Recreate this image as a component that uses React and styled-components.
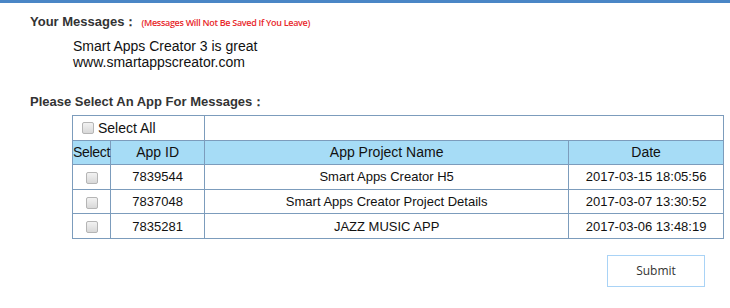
import React from "react";
import styled, { createGlobalStyle } from "styled-components";

const GlobalStyles = createGlobalStyle`
  html, body {
    margin: 0;
    padding: 0;
    background: #fff;
  }
  body {
    font-family: "Liberation Sans", Arial, sans-serif;
    color: #222;
  }
`;

const Page = styled.div`
  width: 730px;
  height: 308px;
  border-top: 3px solid #4a86c6;
  box-sizing: border-box;
  padding: 11px 0 0 30px;
`;

const Title = styled.h3`
  margin: 0;
  font-size: 13px;
  font-weight: bold;
  color: #333;
  line-height: 16px;
  display: flex;
  align-items: baseline;
`;

const Note = styled.span`
  font-size: 9px;
  font-weight: 600;
  color: #e8282b;
  margin-left: 4px;
  letter-spacing: -0.3px;
  font-family: "Open Sans", "Liberation Sans", sans-serif;
`;

const Message = styled.div`
  margin: 7px 0 0 43px;
  font-size: 14px;
  line-height: 16px;
  color: #111;
`;

const SectionTitle = styled(Title)`
  margin-top: 24px;
`;

const Table = styled.table`
  margin: 5px 0 0 42px;
  width: 652px;
  border-collapse: collapse;
  font-size: 13px;
  color: #111;
  border: 1px solid #7c9cbc;
`;

const Cell = styled.td`
  border: 1px solid #7c9cbc;
  border-top-color: ${(p) => (p.$soft ? "#c4d4e2" : "#7c9cbc")};
  height: 23.6px;
  padding: 0;
  text-align: center;
  width: ${(p) => p.$w || "auto"};
  background: ${(p) => (p.$head ? "#a6dcf6" : "#fff")};
  letter-spacing: ${(p) => (p.$tight ? "-0.3px" : "0")};
  font-size: ${(p) => (p.$head ? "14px" : "13px")};
`;

const AllCell = styled(Cell)`
  text-align: left;
  padding-left: 9px;
  font-size: 14px;
`;

const Box = styled.span`
  display: inline-block;
  width: 10px;
  height: 10px;
  border: 1px solid #b5b5b5;
  border-radius: 2px;
  background: linear-gradient(#f2f2f2, #d8d8d8);
  vertical-align: ${(p) => (p.$inline ? "-1px" : "middle")};
  margin-right: ${(p) => (p.$inline ? "4px" : "0")};
`;

const Footer = styled.div`
  display: flex;
  justify-content: flex-end;
  padding: 16px 25px 0 0;
`;

const Submit = styled.button`
  width: 98px;
  height: 32px;
  background: #fff;
  border: 1px solid #a9d3f6;
  font-family: "Open Sans", "Noto Sans", sans-serif;
  font-size: 12px;
  color: #333;
  cursor: pointer;
`;

const apps = [
  { id: "7839544", name: "Smart Apps Creator H5", date: "2017-03-15 18:05:56" },
  { id: "7837048", name: "Smart Apps Creator Project Details", date: "2017-03-07 13:30:52" },
  { id: "7835281", name: "JAZZ MUSIC APP", date: "2017-03-06 13:48:19" },
];

const App = () => {
  return (
    <>
      <GlobalStyles />
      <Page>
        <Title>
          Your Messages：<Note>(Messages Will Not Be Saved If You Leave)</Note>
        </Title>
        <Message>
          Smart Apps Creator 3 is great
          <br />
          www.smartappscreator.com
        </Message>
        <SectionTitle>Please Select An App For Messages：</SectionTitle>
        <Table>
          <tbody>
            <tr>
              <AllCell colSpan={2}>
                <Box $inline />
                Select All
              </AllCell>
              <Cell colSpan={2} />
            </tr>
            <tr>
              <Cell $head $tight $w="36px">Select</Cell>
              <Cell $head $w="93px">App ID</Cell>
              <Cell $head $w="363px">App Project Name</Cell>
              <Cell $head>Date</Cell>
            </tr>
            {apps.map((app, i) => (
              <tr key={app.id}>
                <Cell $soft={i === 0}>
                  <Box />
                </Cell>
                <Cell $soft={i === 0}>{app.id}</Cell>
                <Cell $soft={i === 0}>{app.name}</Cell>
                <Cell $soft={i === 0}>{app.date}</Cell>
              </tr>
            ))}
          </tbody>
        </Table>
        <Footer>
          <Submit>Submit</Submit>
        </Footer>
      </Page>
    </>
  );
};

export default App;
